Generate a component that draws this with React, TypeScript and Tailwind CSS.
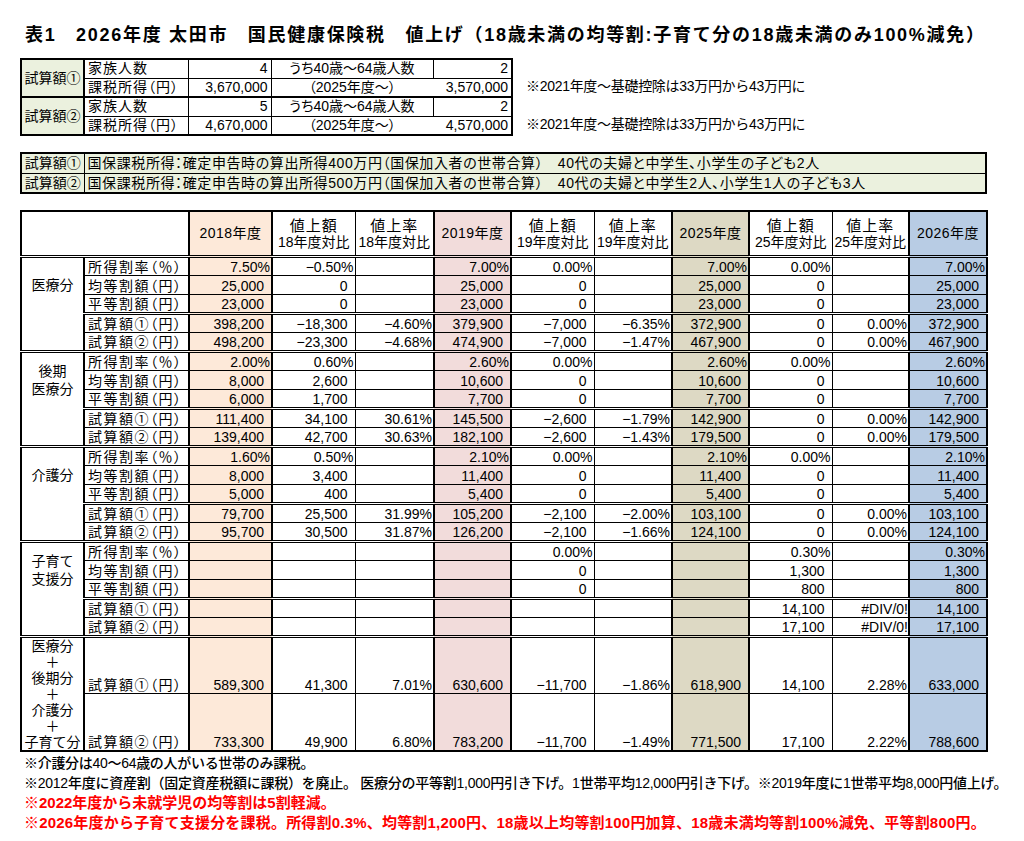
import React from "react";

const yearBg = [
  "bg-[#fde9d9]",
  "",
  "",
  "bg-[#f2dcdb]",
  "",
  "",
  "bg-[#ddd9c4]",
  "",
  "",
  "bg-[#b8cce4]",
];

type Sep = "none" | "double" | "bottom";

function dataCls(i: number, val: string, sep: Sep, tall = false) {
  const c = ["border border-black p-0 whitespace-nowrap text-right align-bottom", yearBg[i]];
  c.push(tall ? "h-[57px]" : "h-[19px]");
  if (i % 3 === 0) c.push("border-l-2 border-r-2");
  if (val.endsWith("%")) c.push("pr-[1px]");
  else if (val === "#DIV/0!") c.push("text-center");
  else c.push("pr-[7px]");
  if (sep === "double") c.push("border-b-[3px] [border-bottom-style:double]");
  if (sep === "bottom") c.push("border-b-2");
  return c.join(" ");
}

function labelCls(sep: Sep, tall = false) {
  const c = [
    "border border-black border-l-2 p-0 pl-[3px] text-left whitespace-nowrap align-bottom tracking-[1.5px] [font-feature-settings:'palt']",
  ];
  c.push(tall ? "h-[57px]" : "h-[19px]");
  if (sep === "double") c.push("border-b-[3px] [border-bottom-style:double]");
  if (sep === "bottom") c.push("border-b-2");
  return c.join(" ");
}

const LABELS = ["所得割率（％）", "均等割額（円）", "平等割額（円）", "試算額①（円）", "試算額②（円）"];

type Section = { cat: string[]; rows: string[][] };

const sections: Section[] = [
  {
    cat: ["医療分"],
    rows: [
      ["7.50%", "−0.50%", "", "7.00%", "0.00%", "", "7.00%", "0.00%", "", "7.00%"],
      ["25,000", "0", "", "25,000", "0", "", "25,000", "0", "", "25,000"],
      ["23,000", "0", "", "23,000", "0", "", "23,000", "0", "", "23,000"],
      ["398,200", "−18,300", "−4.60%", "379,900", "−7,000", "−6.35%", "372,900", "0", "0.00%", "372,900"],
      ["498,200", "−23,300", "−4.68%", "474,900", "−7,000", "−1.47%", "467,900", "0", "0.00%", "467,900"],
    ],
  },
  {
    cat: ["後期", "医療分"],
    rows: [
      ["2.00%", "0.60%", "", "2.60%", "0.00%", "", "2.60%", "0.00%", "", "2.60%"],
      ["8,000", "2,600", "", "10,600", "0", "", "10,600", "0", "", "10,600"],
      ["6,000", "1,700", "", "7,700", "0", "", "7,700", "0", "", "7,700"],
      ["111,400", "34,100", "30.61%", "145,500", "−2,600", "−1.79%", "142,900", "0", "0.00%", "142,900"],
      ["139,400", "42,700", "30.63%", "182,100", "−2,600", "−1.43%", "179,500", "0", "0.00%", "179,500"],
    ],
  },
  {
    cat: ["介護分"],
    rows: [
      ["1.60%", "0.50%", "", "2.10%", "0.00%", "", "2.10%", "0.00%", "", "2.10%"],
      ["8,000", "3,400", "", "11,400", "0", "", "11,400", "0", "", "11,400"],
      ["5,000", "400", "", "5,400", "0", "", "5,400", "0", "", "5,400"],
      ["79,700", "25,500", "31.99%", "105,200", "−2,100", "−2.00%", "103,100", "0", "0.00%", "103,100"],
      ["95,700", "30,500", "31.87%", "126,200", "−2,100", "−1.66%", "124,100", "0", "0.00%", "124,100"],
    ],
  },
  {
    cat: ["子育て", "支援分"],
    rows: [
      ["", "", "", "", "0.00%", "", "", "0.30%", "", "0.30%"],
      ["", "", "", "", "0", "", "", "1,300", "", "1,300"],
      ["", "", "", "", "0", "", "", "800", "", "800"],
      ["", "", "", "", "", "", "", "14,100", "#DIV/0!", "14,100"],
      ["", "", "", "", "", "", "", "17,100", "#DIV/0!", "17,100"],
    ],
  },
];

const combined = [
  ["589,300", "41,300", "7.01%", "630,600", "−11,700", "−1.86%", "618,900", "14,100", "2.28%", "633,000"],
  ["733,300", "49,900", "6.80%", "783,200", "−11,700", "−1.49%", "771,500", "17,100", "2.22%", "788,600"],
];

const headers: { top: string; sub?: string }[] = [
  { top: "2018年度" },
  { top: "値上額", sub: "18年度対比" },
  { top: "値上率", sub: "18年度対比" },
  { top: "2019年度" },
  { top: "値上額", sub: "19年度対比" },
  { top: "値上率", sub: "19年度対比" },
  { top: "2025年度" },
  { top: "値上額", sub: "25年度対比" },
  { top: "値上率", sub: "25年度対比" },
  { top: "2026年度" },
];

function MainTable() {
  return (
    <table className="table-fixed border-collapse w-[967px] text-[14px] leading-[16px]">
      <colgroup>
        <col className="w-[63px]" />
        <col className="w-[105px]" />
        <col className="w-[83px]" />
        <col className="w-[83px]" />
        <col className="w-[79px]" />
        <col className="w-[77px]" />
        <col className="w-[83px]" />
        <col className="w-[78px]" />
        <col className="w-[77px]" />
        <col className="w-[83px]" />
        <col className="w-[77px]" />
        <col className="w-[78px]" />
      </colgroup>
      <thead>
        <tr>
          <th
            colSpan={2}
            className="border border-black border-l-2 border-t-2 border-b-[3px] [border-bottom-style:double] h-[45px] p-0"
          />
          {headers.map((h, i) => (
            <th
              key={i}
              className={
                "border border-black border-t-2 border-b-[3px] [border-bottom-style:double] h-[45px] p-0 font-normal text-center align-middle whitespace-nowrap " +
                (i % 3 === 0 ? "border-l-2 border-r-2 " : "") +
                yearBg[i]
              }
            >
              {h.sub ? (
                <div className="flex flex-col items-center">
                  <span className="text-[15px] leading-[17px] tracking-[1px]">{h.top}</span>
                  <span className="text-[14px] leading-[16px]">{h.sub}</span>
                </div>
              ) : (
                <span className="text-[14px] tracking-[0.5px]">{h.top}</span>
              )}
            </th>
          ))}
        </tr>
      </thead>
      <tbody>
        {sections.map((s, si) =>
          s.rows.map((r, ri) => {
            const sep: Sep = ri === 2 || ri === 4 ? "double" : "none";
            return (
              <tr key={si + "-" + ri}>
                {ri === 0 && (
                  <td
                    rowSpan={3}
                    className="border border-black border-l-2 border-r-2 border-b-0 p-0 text-center align-middle leading-[18px]"
                  >
                    {s.cat.map((c, k) => (
                      <div key={k}>{c}</div>
                    ))}
                  </td>
                )}
                {ri === 3 && (
                  <td
                    rowSpan={2}
                    className="border border-black border-l-2 border-r-2 border-t-0 border-b-[3px] [border-bottom-style:double] p-0"
                  />
                )}
                <td className={labelCls(sep)}>{LABELS[ri]}</td>
                {r.map((v, i) => (
                  <td key={i} className={dataCls(i, v, sep)}>
                    {v}
                  </td>
                ))}
              </tr>
            );
          })
        )}
        {combined.map((r, ri) => {
          const sep: Sep = ri === 1 ? "bottom" : "none";
          return (
            <tr key={"c" + ri}>
              {ri === 0 && (
                <td
                  rowSpan={2}
                  className="border border-black border-l-2 border-r-2 border-b-2 p-0 text-center align-middle leading-[16px]"
                >
                  <div>医療分</div>
                  <div>＋</div>
                  <div>後期分</div>
                  <div>＋</div>
                  <div>介護分</div>
                  <div>＋</div>
                  <div className="whitespace-nowrap">子育て分</div>
                </td>
              )}
              <td className={labelCls(sep, true)}>{ri === 0 ? "試算額①（円）" : "試算額②（円）"}</td>
              {r.map((v, i) => (
                <td key={i} className={dataCls(i, v, sep, true)}>
                  {v}
                </td>
              ))}
            </tr>
          );
        })}
      </tbody>
    </table>
  );
}

function TopTable() {
  const lab =
    "border border-black p-0 pl-[3px] h-[19px] text-left whitespace-nowrap tracking-[1px] [font-feature-settings:'palt']";
  const num = "border border-black p-0 pr-[3px] h-[19px] text-right whitespace-nowrap";
  const mid = "border border-black p-0 h-[19px] text-center whitespace-nowrap [font-feature-settings:'palt']";
  const cat =
    "border border-black border-l-2 border-b-2 border-r-2 p-0 text-center align-middle bg-[#ebf1de] whitespace-nowrap";
  const blocks = [
    { c: "試算額①", n: "4", inc: "3,670,000", n2: "2", inc2: "3,570,000", top: true },
    { c: "試算額②", n: "5", inc: "4,670,000", n2: "2", inc2: "4,570,000", top: false },
  ];
  return (
    <div className="flex items-start">
      <table className="table-fixed border-collapse w-[491px] text-[14px] leading-[17px]">
        <colgroup>
          <col className="w-[63px]" />
          <col className="w-[104px]" />
          <col className="w-[83px]" />
          <col className="w-[162px]" />
          <col className="w-[79px]" />
        </colgroup>
        <tbody>
          {blocks.map((b, k) => (
            <React.Fragment key={k}>
              <tr>
                <td rowSpan={2} className={cat + (b.top ? " border-t-2" : "")}>
                  {b.c}
                </td>
                <td className={lab + (b.top ? " border-t-2" : "")}>家族人数</td>
                <td className={num + (b.top ? " border-t-2" : "")}>{b.n}</td>
                <td className={mid + (b.top ? " border-t-2" : "")}>うち40歳〜64歳人数</td>
                <td className={num + " border-r-2" + (b.top ? " border-t-2" : "")}>{b.n2}</td>
              </tr>
              <tr>
                <td className={lab + " border-b-2"}>課税所得（円）</td>
                <td className={num + " border-b-2"}>{b.inc}</td>
                <td className={mid + " border-b-2 border-r-0"}>（2025年度〜）</td>
                <td className={num + " border-b-2 border-r-2 border-l-0"}>{b.inc2}</td>
              </tr>
            </React.Fragment>
          ))}
        </tbody>
      </table>
      <div className="flex flex-col pl-[13px] text-[14px] leading-[19px] tracking-[-0.3px]">
        <div className="h-[19px]" />
        <div className="h-[19px]">※2021年度〜基礎控除は33万円から43万円に</div>
        <div className="h-[19px]" />
        <div className="h-[19px]">※2021年度〜基礎控除は33万円から43万円に</div>
      </div>
    </div>
  );
}

function CaseTable() {
  const rows = [
    ["試算額①", "国保課税所得：確定申告時の算出所得400万円（国保加入者の世帯合算）　40代の夫婦と中学生、小学生の子ども2人"],
    ["試算額②", "国保課税所得：確定申告時の算出所得500万円（国保加入者の世帯合算）　40代の夫婦と中学生2人、小学生1人の子ども3人"],
  ];
  return (
    <table className="table-fixed border-collapse w-[967px] text-[14px] leading-[18px] bg-[#ebf1de]">
      <colgroup>
        <col className="w-[63px]" />
        <col />
      </colgroup>
      <tbody>
        {rows.map((r, i) => (
          <tr key={i}>
            <td
              className={
                "border border-black border-l-2 p-0 h-[20px] text-center whitespace-nowrap " +
                (i === 0 ? "border-t-2" : "border-b-2")
              }
            >
              {r[0]}
            </td>
            <td
              className={
                "border border-black border-r-2 p-0 pl-[3px] h-[20px] text-left whitespace-nowrap tracking-[0.6px] [font-feature-settings:'palt'] " +
                (i === 0 ? "border-t-2" : "border-b-2")
              }
            >
              {r[1]}
            </td>
          </tr>
        ))}
      </tbody>
    </table>
  );
}

export default function App() {
  return (
    <div className="w-[1024px] h-[841px] bg-white text-black pl-[20px] pt-[23px] font-['Liberation_Sans','Noto_Sans_CJK_JP',sans-serif] overflow-hidden">
      <div className="ml-[5px] h-[24px] leading-[24px] text-[18px] font-bold tracking-[1.7px] whitespace-nowrap">
        表1　2026年度 太田市　国民健康保険税　値上げ（18歳未満の均等割:子育て分の18歳未満のみ100%減免）
      </div>
      <div className="mt-[11px]">
        <TopTable />
      </div>
      <div className="mt-[16px]">
        <CaseTable />
      </div>
      <div className="mt-[16px]">
        <MainTable />
      </div>
      <div className="pl-[4px] mt-[1px] whitespace-nowrap">
        <div className="text-[14px] leading-[20px] font-medium tracking-[-0.3px]">
          ※介護分は40〜64歳の人がいる世帯のみ課税。
        </div>
        <div className="text-[14px] leading-[20px] font-medium tracking-[-0.25px]">
          ※2012年度に資産割（固定資産税額に課税）を廃止。 医療分の平等割1,000円引き下げ。1世帯平均12,000円引き下げ。※2019年度に1世帯平均8,000円値上げ。
        </div>
        <div className="text-[15px] leading-[20px] font-bold text-[#ff0000]">
          ※2022年度から未就学児の均等割は5割軽減。
        </div>
        <div className="text-[15px] leading-[20px] font-bold text-[#ff0000] tracking-[0.2px]">
          ※2026年度から子育て支援分を課税。所得割0.3%、均等割1,200円、18歳以上均等割100円加算、18歳未満均等割100%減免、平等割800円。
        </div>
      </div>
    </div>
  );
}
